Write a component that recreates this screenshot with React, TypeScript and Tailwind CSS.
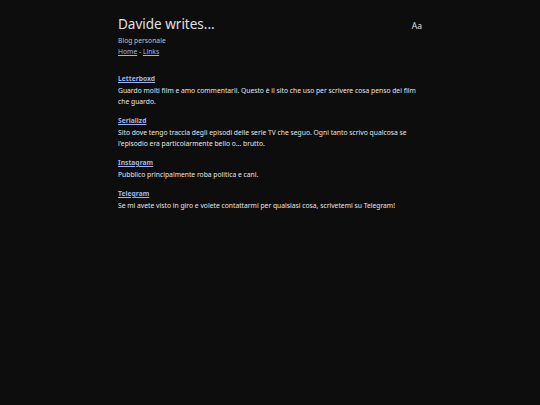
const links = [
  {
    name: 'Letterboxd',
    text: 'Guardo molti film e amo commentarli. Questo è il sito che uso per scrivere cosa penso dei film che guardo.',
  },
  {
    name: 'Serializd',
    text: "Sito dove tengo traccia degli episodi delle serie TV che seguo. Ogni tanto scrivo qualcosa se l'episodio era particolarmente bello o... brutto.",
  },
  { name: 'Instagram', text: 'Pubblico principalmente roba politica e cani.' },
  {
    name: 'Telegram',
    text: 'Se mi avete visto in giro e volete contattarmi per qualsiasi cosa, scrivetemi su Telegram!',
  },
];

export default function App() {
  return (
    <div className="min-h-[405px] bg-[#0d0d0d] text-[#e6e6e6] font-['Noto_Sans',sans-serif]">
      <div className="mx-auto w-[304px] pt-[14px]">
        <header className="flex items-start justify-between">
          <div>
            <h1 className="text-[13.5px] leading-[20px] text-[#e0e0e0]">Davide writes...</h1>
            <p className="mt-[2px] text-[6.75px] leading-[10px] text-[#c0c0c0]">Blog personale</p>
            <nav className="text-[6.75px] leading-[11px]">
              <a href="#" className="text-[#9db3f0] underline">Home</a>
              <span className="text-[#c0c0c0]"> - </span>
              <a href="#" className="text-[#9db3f0] underline">Links</a>
            </nav>
          </div>
          <button className="mt-[6px] text-[8.5px] leading-[12px] text-[#e0e0e0]">Aa</button>
        </header>
        <main className="mt-[16px] flex flex-col gap-[8px] text-[6.75px] leading-[11px]">
          {links.map((l) => (
            <section key={l.name}>
              <a href="#" className="block w-fit font-bold text-[#9db3f0] underline">
                {l.name}
              </a>
              <p className="mt-[1px] text-[#e6e6e6]">{l.text}</p>
            </section>
          ))}
        </main>
      </div>
    </div>
  );
}
